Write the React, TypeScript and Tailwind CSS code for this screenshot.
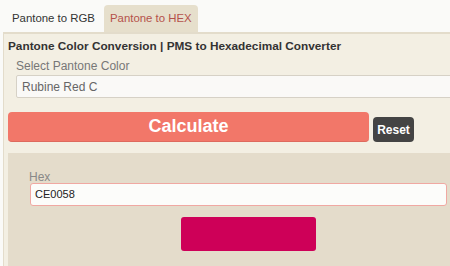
import React from 'react';

const App: React.FC = () => {
  return (
    <div className="w-[450px] h-[266px] overflow-hidden bg-[#fafaf8] font-['Liberation_Sans',Arial,sans-serif]">
      {/* Tabs */}
      <div className="flex items-end pt-[5px] pl-[3px] h-[32px]">
        <div className="px-[9px] h-[27px] flex items-center text-[11.4px] text-[#333]">Pantone to RGB</div>
        <div className="px-[6px] h-[27px] flex items-center text-[11.4px] text-[#b5514a] bg-[#e6dfcc] rounded-t-[4px]">
          Pantone to HEX
        </div>
      </div>

      {/* Panel */}
      <div className="ml-[3px] w-[480px] bg-[#f3efe3] border-t-2 border-l border-[#e3dccb] pl-[4px] pb-4">
        <h2 className="pt-[4px] text-[11.8px] font-bold text-[#333] leading-[16px]">
          Pantone Color Conversion | PMS to Hexadecimal Converter
        </h2>

        <div className="mt-[5px] pl-[8px]">
          <label className="block text-[12px] text-[#777] leading-[14px]">Select Pantone Color</label>
          <div className="mt-[2px] h-[23px] border border-[#d6d1c6] rounded-[2px] bg-[#faf9f7] flex items-center pl-[5px] text-[12px] text-[#666]">
            Rubine Red C
          </div>
        </div>

        <div className="mt-[14px] flex items-end gap-[4px]">
          <button className="w-[361px] h-[30px] rounded-[4px] bg-[#f27769] border-b border-[#de6a5e] text-white text-[18px] font-bold">
            Calculate
          </button>
          <button className="w-[41px] h-[25px] rounded-[4px] bg-[#444] text-white text-[12px] font-bold">Reset</button>
        </div>

        <div className="mt-[11px] bg-[#e4dccb] pl-[21px] pt-[17px] pb-[20px]">
          <label className="block text-[12px] text-[#888] leading-[14px]">Hex</label>
          <div className="mt-[-1px] ml-[1px] w-[417px] h-[23px] border border-[#f0a8a2] rounded-[3px] bg-[#fcfcfa] flex items-center pl-[4px] text-[11px] text-[#222]">
            CE0058
          </div>
          <div className="mt-[11px] ml-[152px] w-[135px] h-[34px] rounded-[3px] bg-[#ce0058]" />
        </div>
      </div>
    </div>
  );
};

export default App;
